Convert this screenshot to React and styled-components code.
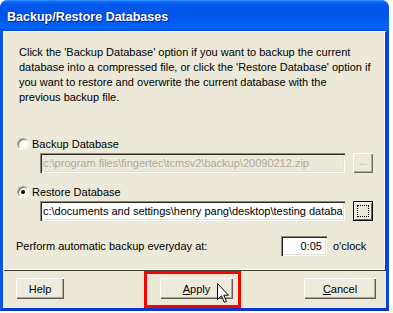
import React from 'react';
import styled, { createGlobalStyle } from 'styled-components';

const Global = createGlobalStyle`
  html, body { margin: 0; padding: 0; background: #fff; }
  body {
    font-family: "Liberation Sans", Arial, sans-serif;
    font-size: 11px;
    color: #000;
  }
`;

const Window = styled.div`
  width: 389px;
  height: 311px;
  display: flex;
  flex-direction: column;
  border-radius: 8px 8px 0 0;
  overflow: hidden;
  background: #0055ea;
`;

const TitleBar = styled.div`
  height: 31px;
  flex: 0 0 31px;
  display: flex;
  align-items: center;
  padding: 3px 0 0 7px;
  box-sizing: border-box;
  background: linear-gradient(
    to bottom,
    #3d95ff 0%,
    #0a6af5 6%,
    #0058ee 14%,
    #0054e8 45%,
    #0060f8 80%,
    #0064fc 90%,
    #0050e0 100%
  );
  color: #fff;
  font-weight: bold;
  font-size: 12.5px;
  text-shadow: 1px 1px #0a1880;
`;

const Frame = styled.div`
  flex: 1;
  display: flex;
  flex-direction: column;
  border-style: solid;
  border-width: 0 3px 3px 3px;
  border-color: #0a55e6 #0846d6 #0838c8 #0a55e6;
  background: #ece9d8;
`;

const Panel = styled.div`
  height: 240px;
  flex: 0 0 240px;
  box-sizing: border-box;
  display: flex;
  flex-direction: column;
  padding-top: 14px;
  box-shadow: inset 1px 1px #fbfaf5, inset -1px -1px #3c3b36, inset -2px -2px #fff;
`;

const Paragraph = styled.div`
  margin-left: 16px;
  line-height: 15px;
`;

const Line = styled.span`
  display: block;
  white-space: nowrap;
`;

const RadioRow = styled.div`
  display: flex;
  align-items: center;
  height: 15px;
  margin-left: 14px;
  margin-top: ${(p) => p.$top}px;
  gap: 3px;
`;

const RadioCircle = styled.span`
  width: 12px;
  height: 12px;
  box-sizing: border-box;
  border-radius: 50%;
  border: 1px solid;
  border-color: #aca899 #fff #fff #aca899;
  background: #fff;
  box-shadow: inset 1px 1px #716f64, inset -1px -1px #f1efe2;
  display: flex;
  align-items: center;
  justify-content: center;
  &::after {
    content: '';
    width: 4px;
    height: 4px;
    border-radius: 50%;
    background: ${(p) => (p.$checked ? '#000' : 'transparent')};
  }
`;

const FieldRow = styled.div`
  display: flex;
  margin-left: 37px;
  margin-top: 2px;
  gap: 8px;
`;

const Field = styled.div`
  width: ${(p) => p.$w}px;
  height: 20px;
  box-sizing: border-box;
  display: flex;
  align-items: center;
  justify-content: ${(p) => (p.$right ? 'flex-end' : 'flex-start')};
  padding: ${(p) => (p.$right ? '0 5px 0 0' : '0 0 0 3px')};
  overflow: hidden;
  white-space: nowrap;
  background: ${(p) => (p.$disabled ? '#ece9d8' : '#fff')};
  color: ${(p) => (p.$disabled ? '#aca899' : '#000')};
  box-shadow: inset 1px 1px #8a877b, inset 2px 2px #2b2a26, inset -1px -1px #fff,
    inset -2px -2px #e4e1d4;
`;

const DotsButton = styled.div`
  position: relative;
  width: 20px;
  height: 20px;
  box-sizing: border-box;
  display: flex;
  align-items: center;
  justify-content: center;
  padding-bottom: 3px;
  color: ${(p) => (p.$disabled ? '#aca899' : '#000')};
  font-size: 10px;
  background: #ece9d8;
  box-shadow: ${(p) =>
    p.$focused
      ? 'inset 0 0 0 1px #000, inset 2px 2px #fff, inset -2px -2px #716f64'
      : 'inset 1px 1px #fff, inset -1px -1px #716f64, inset -2px -2px #aca899'};
  &::after {
    content: '';
    display: ${(p) => (p.$focused ? 'block' : 'none')};
    position: absolute;
    inset: 4px;
    border: 1px dotted #000;
  }
`;

const PerformRow = styled.div`
  display: flex;
  align-items: center;
  margin-left: 13px;
  margin-top: 15px;
  height: 20px;
`;

const PerformLabel = styled.span`
  flex: 0 0 265px;
`;

const Suffix = styled.span`
  margin-left: 6px;
`;

const Footer = styled.div`
  flex: 1;
  display: flex;
  align-items: stretch;
  padding-left: 13px;
`;

const Button = styled.div`
  width: ${(p) => p.$w}px;
  height: 21px;
  box-sizing: border-box;
  margin-top: 7px;
  margin-left: ${(p) => p.$ml || 0}px;
  display: flex;
  align-items: center;
  justify-content: center;
  background: #eeebdd;
  box-shadow: inset 1px 1px #fff, inset -1px -1px #5e5c52, inset -2px -2px #aca899;
`;

const RedBox = styled.div`
  position: relative;
  margin-left: 80px;
  width: 97px;
  box-sizing: border-box;
  border: 3px solid #ff0000;
  padding: 4px 0 0 13px;
  display: flex;
  align-items: flex-start;
  ${Button} {
    margin-top: 0;
  }
`;

const Cursor = styled.svg`
  position: absolute;
  left: 70px;
  top: 9px;
`;

const U = styled.span`
  text-decoration: underline;
`;

export default function App() {
  return (
    <>
      <Global />
      <Window>
        <TitleBar>Backup/Restore Databases</TitleBar>
        <Frame>
          <Panel>
            <Paragraph>
              <Line>Click the 'Backup Database' option if you want to backup the current</Line>
              <Line>database into a compressed file, or click the 'Restore Database' option if</Line>
              <Line>you want to restore and overwrite the current database with the</Line>
              <Line>previous backup file.</Line>
            </Paragraph>
            <RadioRow $top={31}>
              <RadioCircle />
              <span>Backup Database</span>
            </RadioRow>
            <FieldRow>
              <Field $w={305} $disabled>c:\program files\fingertec\tcmsv2\backup\20090212.zip</Field>
              <DotsButton $disabled>...</DotsButton>
            </FieldRow>
            <RadioRow $top={11}>
              <RadioCircle $checked />
              <span>Restore Database</span>
            </RadioRow>
            <FieldRow>
              <Field $w={305}>c:\documents and settings\henry pang\desktop\testing databa</Field>
              <DotsButton $focused />
            </FieldRow>
            <PerformRow>
              <PerformLabel>Perform automatic backup everyday at:</PerformLabel>
              <Field $w={46} $right>0:05</Field>
              <Suffix>o'clock</Suffix>
            </PerformRow>
          </Panel>
          <Footer>
            <Button $w={48}>Help</Button>
            <RedBox>
              <Button $w={73}>
                <span>
                  <U>A</U>pply
                </span>
              </Button>
              <Cursor width="12" height="20" viewBox="0 0 12 20">
                <path
                  d="M0.5 0.5 L0.5 16.5 L4.5 12.8 L7.3 19.3 L9.5 18.4 L6.8 12.2 L11.5 12.2 Z"
                  fill="#fff"
                  stroke="#000"
                  strokeWidth="1"
                  strokeLinejoin="miter"
                />
              </Cursor>
            </RedBox>
            <Button $w={72} $ml={63}>
              <span>
                <U>C</U>ancel
              </span>
            </Button>
          </Footer>
        </Frame>
      </Window>
    </>
  );
}
